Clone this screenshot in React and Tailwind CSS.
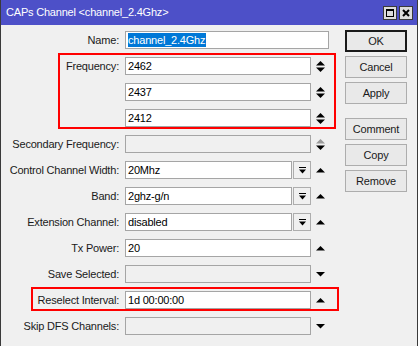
import React from 'react';

const font = "font-['Liberation_Sans',Arial,sans-serif] text-[11px] tracking-[-0.2px]";

function UpDown({ upGray }) {
  return (
    <svg width="9" height="11" viewBox="0 0 9 11" className="block">
      <polygon points="4.5,0 9,4.5 0,4.5" fill={upGray ? '#9a9a9a' : '#000'} />
      <polygon points="0,6.5 9,6.5 4.5,11" fill="#000" />
    </svg>
  );
}

function Up() {
  return (
    <svg width="9" height="5" viewBox="0 0 9 5" className="block">
      <polygon points="4.5,0 9,4.5 0,4.5" fill="#000" />
    </svg>
  );
}

function Down() {
  return (
    <svg width="9" height="5" viewBox="0 0 9 5" className="block">
      <polygon points="0,0 9,0 4.5,4.5" fill="#000" />
    </svg>
  );
}

function DropButton() {
  return (
    <div className="ml-[1px] flex h-[18px] w-[18px] items-center justify-center border border-[#adadad] bg-[#f0f0f0]">
      <svg width="7" height="7" viewBox="0 0 7 7" className="block">
        <rect x="0" y="0" width="7" height="1" fill="#000" />
        <polygon points="0,2.5 7,2.5 3.5,6.5" fill="#000" />
      </svg>
    </div>
  );
}

function Field({ value, width, disabled, children }) {
  return (
    <div
      className={`flex h-[18px] items-center border border-[#a5a5a5] pl-[2px] ${disabled ? 'bg-[#f0f0f0]' : 'bg-white'}`}
      style={{ width }}
    >
      {children ?? <span className="whitespace-nowrap text-black">{value}</span>}
    </div>
  );
}

function Row({ label, children }) {
  return (
    <div className="flex h-[18px] items-center">
      <div className="w-[118px] whitespace-nowrap text-right text-[#1a1a1a]">{label}</div>
      <div className="ml-[6px] flex items-center">{children}</div>
    </div>
  );
}

function Btn({ label, primary }) {
  return (
    <div
      className={`flex h-[22px] w-[62px] items-center justify-center bg-[#e9e9e9] text-[#1a1a1a] ${
        primary ? 'border-2 border-[#1a1a1a]' : 'border border-[#adadad]'
      }`}
    >
      {label}
    </div>
  );
}

export default function App() {
  return (
    <div className={`relative h-[346px] w-[418px] overflow-hidden border-x border-[#3a3a3a] bg-[#f0f0f0] ${font}`}>
      {/* title bar */}
      <div className="flex h-[25px] items-center bg-[#4d50c8] pl-[5px] pr-[4px]">
        <span className="flex-1 whitespace-nowrap text-white">CAPs Channel &lt;channel_2.4Ghz&gt;</span>
        <div className="flex gap-[2px]">
          <div className="flex h-[14px] w-[14px] items-center justify-center border border-[#3a3a3a] bg-[#dcdcdc]">
            <div className="h-[8px] w-[8px] border border-t-2 border-black" />
          </div>
          <div className="flex h-[14px] w-[14px] items-center justify-center border border-[#3a3a3a] bg-[#dcdcdc]">
            <svg width="8" height="8" viewBox="0 0 8 8" className="block">
              <path d="M1 1 L7 7 M7 1 L1 7" stroke="#000" strokeWidth="2" />
            </svg>
          </div>
        </div>
      </div>

      <div className="flex">
        {/* form */}
        <div className="flex w-[344px] flex-col gap-[8px] pt-[6px]">
          <Row label="Name:">
            <Field width={204}>
              <span className="flex h-[14px] items-center whitespace-nowrap bg-[#0078d7] pr-[1px] text-white">
                channel_2.4Ghz
              </span>
            </Field>
          </Row>
          <Row label="Frequency:">
            <Field value="2462" width={186} />
            <div className="ml-[5px]"><UpDown /></div>
          </Row>
          <Row label="">
            <Field value="2437" width={186} />
            <div className="ml-[5px]"><UpDown /></div>
          </Row>
          <Row label="">
            <Field value="2412" width={186} />
            <div className="ml-[5px]"><UpDown /></div>
          </Row>
          <Row label="Secondary Frequency:">
            <Field value="" width={186} disabled />
            <div className="ml-[5px]"><UpDown upGray /></div>
          </Row>
          <Row label="Control Channel Width:">
            <Field value="20Mhz" width={167} />
            <DropButton />
            <div className="ml-[5px]"><Up /></div>
          </Row>
          <Row label="Band:">
            <Field value="2ghz-g/n" width={167} />
            <DropButton />
            <div className="ml-[5px]"><Up /></div>
          </Row>
          <Row label="Extension Channel:">
            <Field value="disabled" width={167} />
            <DropButton />
            <div className="ml-[5px]"><Up /></div>
          </Row>
          <Row label="Tx Power:">
            <Field value="20" width={186} />
            <div className="ml-[5px]"><Up /></div>
          </Row>
          <Row label="Save Selected:">
            <Field value="" width={186} disabled />
            <div className="ml-[5px]"><Down /></div>
          </Row>
          <Row label="Reselect Interval:">
            <Field value="1d 00:00:00" width={186} />
            <div className="ml-[5px]"><Up /></div>
          </Row>
          <Row label="Skip DFS Channels:">
            <Field value="" width={186} disabled />
            <div className="ml-[5px]"><Down /></div>
          </Row>
        </div>

        {/* buttons */}
        <div className="flex flex-col gap-[4px] pt-[5px]">
          <Btn label="OK" primary />
          <Btn label="Cancel" />
          <Btn label="Apply" />
          <div className="h-[6px]" />
          <Btn label="Comment" />
          <Btn label="Copy" />
          <Btn label="Remove" />
        </div>
      </div>

      {/* red highlight boxes */}
      <div className="pointer-events-none absolute left-[57px] top-[53px] h-[76px] w-[278px] border-2 border-[#ff0000]" />
      <div className="pointer-events-none absolute left-[30px] top-[287px] h-[24px] w-[308px] border-2 border-[#ff0000]" />
    </div>
  );
}
